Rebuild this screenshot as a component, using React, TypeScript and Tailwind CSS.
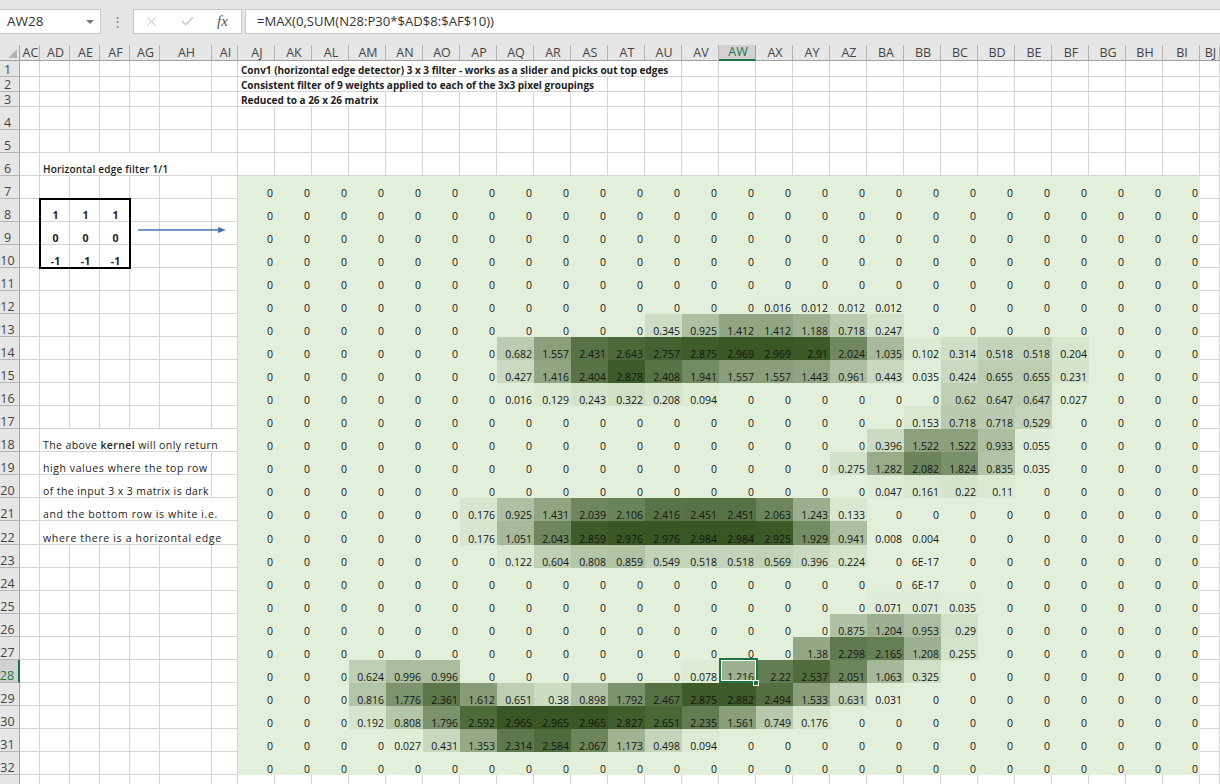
import React from "react";
import { X, Check } from "lucide-react";

const colLabels = ["AJ","AK","AL","AM","AN","AO","AP","AQ","AR","AS","AT","AU","AV","AW","AX","AY","AZ","BA","BB","BC","BD","BE","BF","BG","BH","BI"];
const leftCols = ["AC","AD","AE","AF","AG","AH","AI"];

// sparse data: row -> [first column index, ...values]
const data: Record<number, [number, ...string[]]> = {
  12: [14, "0.016", "0.012", "0.012", "0.012"],
  13: [11, "0.345", "0.925", "1.412", "1.412", "1.188", "0.718", "0.247"],
  14: [7, "0.682", "1.557", "2.431", "2.643", "2.757", "2.875", "2.969", "2.969", "2.91", "2.024", "1.035", "0.102", "0.314", "0.518", "0.518", "0.204"],
  15: [7, "0.427", "1.416", "2.404", "2.878", "2.408", "1.941", "1.557", "1.557", "1.443", "0.961", "0.443", "0.035", "0.424", "0.655", "0.655", "0.231"],
  16: [7, "0.016", "0.129", "0.243", "0.322", "0.208", "0.094", "0", "0", "0", "0", "0", "0", "0.62", "0.647", "0.647", "0.027"],
  17: [18, "0.153", "0.718", "0.718", "0.529"],
  18: [17, "0.396", "1.522", "1.522", "0.933", "0.055"],
  19: [16, "0.275", "1.282", "2.082", "1.824", "0.835", "0.035"],
  20: [17, "0.047", "0.161", "0.22", "0.11"],
  21: [6, "0.176", "0.925", "1.431", "2.039", "2.106", "2.416", "2.451", "2.451", "2.063", "1.243", "0.133"],
  22: [6, "0.176", "1.051", "2.043", "2.859", "2.976", "2.976", "2.984", "2.984", "2.925", "1.929", "0.941", "0.008", "0.004"],
  23: [7, "0.122", "0.604", "0.808", "0.859", "0.549", "0.518", "0.518", "0.569", "0.396", "0.224", "0", "6E-17"],
  24: [18, "6E-17"],
  25: [17, "0.071", "0.071", "0.035"],
  26: [16, "0.875", "1.204", "0.953", "0.29"],
  27: [15, "1.38", "2.298", "2.165", "1.208", "0.255"],
  28: [3, "0.624", "0.996", "0.996", "0", "0", "0", "0", "0", "0", "0.078", "1.216", "2.22", "2.537", "2.051", "1.063", "0.325"],
  29: [3, "0.816", "1.776", "2.361", "1.612", "0.651", "0.38", "0.898", "1.792", "2.467", "2.875", "2.882", "2.494", "1.533", "0.631", "0.031"],
  30: [3, "0.192", "0.808", "1.796", "2.592", "2.965", "2.965", "2.965", "2.827", "2.651", "2.235", "1.561", "0.749", "0.176"],
  31: [4, "0.027", "0.431", "1.353", "2.314", "2.584", "2.067", "1.173", "0.498", "0.094"],
};

function cellValue(row: number, col: number): string {
  const d = data[row];
  if (!d) return "0";
  const start = d[0] as number;
  const v = d[col - start + 1];
  return typeof v === "string" && col >= start ? v : "0";
}

function shade(v: number): string {
  const t = Math.min(1, Math.max(0, v / 2.984));
  const lo = [226, 239, 218];
  const hi = [55, 86, 35];
  const c = lo.map((l, i) => Math.round(l + (hi[i] - l) * t));
  return `rgb(${c[0]},${c[1]},${c[2]})`;
}

const gridCell = "border-r border-b border-[#d4d4d4]";
const leftText: Record<number, { span: number; node: React.ReactNode }> = {
  6: { span: 6, node: <b className="font-semibold text-[10px] tracking-[0.2px]">Horizontal edge filter 1/1</b> },
  18: { span: 6, node: <span className="tracking-[0.41px]">The above <b className="font-semibold">kernel</b> will only return</span> },
  19: { span: 5, node: <span className="tracking-[0.58px]">high values where the top row</span> },
  20: { span: 5, node: <span className="tracking-[0.41px]">of the input 3 x 3 matrix is dark</span> },
  21: { span: 6, node: <span className="tracking-[0.63px]">and the bottom row is white i.e.</span> },
  22: { span: 6, node: <span className="tracking-[0.66px]">where there is a horizontal edge</span> },
};
const titles: Record<number, { span: number; text: string }> = {
  1: { span: 12, text: "Conv1 (horizontal edge detector) 3 x 3 filter - works as a slider and picks out top edges" },
  2: { span: 10, text: "Consistent filter of 9 weights applied to each of the 3x3 pixel groupings" },
  3: { span: 4, text: "Reduced to a 26 x 26 matrix" },
};
const kernel: Record<number, string[]> = { 8: ["1", "1", "1"], 9: ["0", "0", "0"], 10: ["-1", "-1", "-1"] };

function LeftCells({ row }: { row: number }) {
  const t = leftText[row];
  const k = kernel[row];
  const cells: React.ReactNode[] = [];
  cells.push(<div key="ac" className={gridCell} />);
  if (t) {
    cells.push(
      <div key="t" className={`${gridCell} flex items-end pl-[3px] pb-[1px] whitespace-nowrap text-[10.5px] leading-[10px] text-[#222]`} style={{ gridColumn: `span ${t.span}` }}>
        {t.node}
      </div>
    );
    for (let i = t.span + 1; i < 7; i++) cells.push(<div key={i} className={gridCell} />);
  } else {
    for (let i = 1; i < 7; i++) {
      const kv = k && i <= 3 ? k[i - 1] : "";
      cells.push(
        <div key={i} className={`${gridCell} flex items-end justify-center pl-[2px] pb-[1px] text-[10.5px] font-bold leading-[10px] text-[#222]`}>
          {kv}
        </div>
      );
    }
  }
  return <>{cells}</>;
}

function Row({ row }: { row: number }) {
  const active = row === 28;
  const header = (
    <div className={`flex items-end justify-center pr-[4px] text-[12.5px] leading-[12px] border-b border-[#b4b4b4] ${active ? "bg-[#d2d2d2] text-[#217346] border-r-2 border-r-[#217346]" : "bg-[#e6e6e6] text-[#444] border-r border-r-[#a0a0a0]"}`}>
      {row <= 32 ? row : ""}
    </div>
  );
  const green = row >= 7 && row <= 32;
  const title = titles[row];
  return (
    <>
      {header}
      <LeftCells row={row} />
      {green &&
        colLabels.map((_, c) => {
          const v = cellValue(row, c);
          return (
            <div key={c} className="flex items-end justify-end pr-[2px] text-[10.5px] leading-[12px] text-[#151515]" style={{ backgroundColor: shade(parseFloat(v)) }}>
              {v}
            </div>
          );
        })}
      {!green && title && (
        <div className={`${gridCell} flex items-end pl-[3px] whitespace-nowrap text-[10px] font-bold leading-[11px] text-[#222]`} style={{ gridColumn: `span ${title.span}` }}>
          {title.text}
        </div>
      )}
      {!green &&
        colLabels.slice(title ? title.span : 0).map((c) => <div key={c} className={gridCell} />)}
      <div className={gridCell} />
    </>
  );
}

export default function App() {
  const rows = Array.from({ length: 33 }, (_, i) => i + 1);
  return (
    <div className="relative w-[1220px] h-[784px] overflow-hidden bg-white font-['Open_Sans',sans-serif]">
      {/* formula bar */}
      <div className="h-[45px] bg-[#e6e6e6] pt-[9px] flex items-start">
        <div className="w-[101px] h-[25px] bg-white border border-[#c8c8c8] border-l-0 flex items-center justify-between pl-[7px] pr-[6px] text-[13.5px] text-[#333]">
          <span>AW28</span>
          <span className="w-0 h-0 border-l-[4px] border-r-[4px] border-t-[4px] border-l-transparent border-r-transparent border-t-[#777]" />
        </div>
        <div className="w-[32px] h-[25px] flex items-center justify-center text-[#888] text-[13px]">⋮</div>
        <div className="w-[109px] h-[25px] bg-white border border-[#c8c8c8] flex items-center pl-[10px]">
          <X size={15} strokeWidth={1.6} className="text-[#bbb]" />
          <Check size={15} strokeWidth={1.8} className="ml-[21px] text-[#bbb]" />
          <span className="ml-[22px] text-[15px] italic font-['Liberation_Serif',serif] text-[#555]">fx</span>
        </div>
        <div className="ml-[3px] flex-1 h-[25px] bg-white border border-[#c8c8c8] border-r-0 flex items-center pl-[11px] text-[13.1px] text-[#333]">
          =MAX(0,SUM(N28:P30*$AD$8:$AF$10))
        </div>
      </div>

      {/* sheet */}
      <div className="relative grid grid-cols-[20px_20px_30px_30px_30px_30px_52px_26px_repeat(26,37px)_20px] grid-rows-[16px_16px_15px_15px_23px_23px_23px_repeat(26,23.04px)_12px]">
        <div className="relative bg-[#e6e6e6] border-r border-b border-[#a0a0a0]">
          <svg className="absolute left-[8px] top-[3px]" width="10" height="10" viewBox="0 0 10 10"><polygon points="9,1 9,10 0,10" fill="#b5b5b5" /></svg>
        </div>
        {[...leftCols, ...colLabels, "BJ"].map((c) => {
          const active = c === "AW";
          return (
            <div key={c} className={`flex items-center justify-center pt-[1px] pl-[2px] text-[12.5px] leading-none ${active ? "bg-[#d2d2d2] text-[#217346] border-b-2 border-b-[#217346] border-r border-r-[#a0a0a0]" : "bg-[#e6e6e6] text-[#444] border-r border-r-[#b4b4b4] border-b border-b-[#a0a0a0]"}`}>
              {c}
            </div>
          );
        })}
        {rows.map((r) => (
          <Row key={r} row={r} />
        ))}

        {/* kernel box */}
        <div className="absolute left-[39px] top-[153px] w-[92px] h-[71px] border-2 border-black pointer-events-none" />
        {/* arrow */}
        <svg className="absolute left-[137px] top-[179px]" width="90" height="12" viewBox="0 0 90 12">
          <line x1="1" y1="6" x2="82" y2="6" stroke="#4a72b0" strokeWidth="1.5" />
          <polygon points="81,3 89,6 81,9" fill="#4a72b0" />
        </svg>
        {/* selected cell */}
        <div className="absolute left-[719px] top-[613px] w-[39px] h-[25px] border-2 border-[#217346] pointer-events-none">
          <div className="w-full h-full border border-white" />
        </div>
        <div className="absolute left-[753px] top-[635px] w-[6px] h-[6px] bg-[#217346] border border-white" />
      </div>
    </div>
  );
}
